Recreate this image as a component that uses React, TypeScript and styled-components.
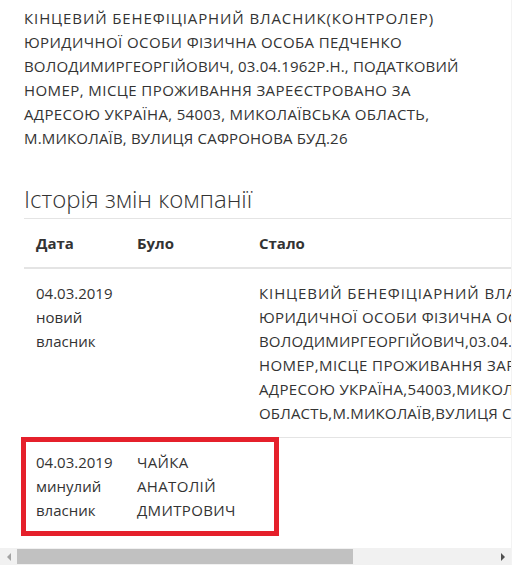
import React from "react";
import styled, { createGlobalStyle } from "styled-components";

const GlobalStyle = createGlobalStyle`
  html, body { margin: 0; padding: 0; background: #ffffff; }
  body { font-family: "Open Sans", "Noto Sans", "DejaVu Sans", sans-serif; color: #333333; }
`;

const Page = styled.div`
  width: 511px;
  border-right: 1px solid #f3f3f3;
  background: #ffffff;
`;

const Content = styled.div`
  padding: 6px 0 0 24px;
`;

const Paragraph = styled.p`
  margin: 0;
  font-size: 15px;
  line-height: 24px;
  color: #333333;
`;

const Line = styled.span<{ $spacing?: number }>`
  display: block;
  white-space: nowrap;
  letter-spacing: ${(p) => (p.$spacing !== undefined ? p.$spacing : 0.5)}px;
`;

const Heading = styled.h3`
  margin: 34px 0 4px;
  font-size: 24px;
  line-height: 30px;
  font-weight: 300;
  color: #333333;
`;

const Scroller = styled.div`
  width: 511px;
  overflow: hidden;
  padding-bottom: 14px;
`;

const Table = styled.table`
  margin-left: 24px;
  width: 697px;
  table-layout: fixed;
  border-collapse: collapse;
  font-size: 15px;
  line-height: 24px;
  color: #333333;
`;

const Th = styled.th<{ $w?: number }>`
  width: ${(p) => (p.$w ? `${p.$w}px` : "auto")};
  text-align: left;
  font-weight: 700;
  padding: 12px 12px;
  border-top: 1px solid #e4e4e4;
  border-bottom: 2px solid #e4e4e4;
  vertical-align: bottom;
`;

const Td = styled.td`
  position: relative;
  padding: 12px 12px;
  vertical-align: top;
  border-top: 1px solid #e4e4e4;
`;

const Names = styled.span`
  letter-spacing: 0.35px;
`;

const Annotation = styled.div`
  position: absolute;
  left: -3px;
  top: -1px;
  width: 258px;
  height: 99px;
  box-sizing: border-box;
  border: 5px solid #e5202b;
  pointer-events: none;
`;

const Scrollbar = styled.div`
  display: flex;
  align-items: stretch;
  width: 511px;
  height: 17px;
  background: #f1f1f1;
`;

const ArrowButton = styled.div<{ $dir: "left" | "right"; $enabled?: boolean }>`
  width: 17px;
  flex: 0 0 17px;
  display: flex;
  align-items: center;
  justify-content: center;
  &::before {
    content: "";
    width: 0;
    height: 0;
    border-top: 4px solid transparent;
    border-bottom: 4px solid transparent;
    ${(p) =>
      p.$dir === "left"
        ? `border-right: 4px solid ${p.$enabled ? "#505050" : "#a3a3a3"};`
        : `border-left: 4px solid ${p.$enabled ? "#505050" : "#a3a3a3"};`}
  }
`;

const Track = styled.div`
  flex: 1;
  display: flex;
  align-items: stretch;
  padding: 1px 0;
`;

const Thumb = styled.div`
  background: #c1c1c1;
`;

const topLines: [string, number][] = [
  ["КІНЦЕВИЙ БЕНЕФІЦІАРНИЙ ВЛАСНИК(КОНТРОЛЕР)", 0.9],
  ["ЮРИДИЧНОЇ ОСОБИ ФІЗИЧНА ОСОБА ПЕДЧЕНКО", 0.4],
  ["ВОЛОДИМИРГЕОРГІЙОВИЧ, 03.04.1962Р.Н., ПОДАТКОВИЙ", 0.17],
  ["НОМЕР, МІСЦЕ ПРОЖИВАННЯ ЗАРЕЄСТРОВАНО ЗА", 0.43],
  ["АДРЕСОЮ УКРАЇНА, 54003, МИКОЛАЇВСЬКА ОБЛАСТЬ,", 0.32],
  ["М.МИКОЛАЇВ, ВУЛИЦЯ САФРОНОВА БУД.26", 0.18],
];

const newLines: [string, number][] = [
  ["КІНЦЕВИЙ БЕНЕФІЦІАРНИЙ ВЛАСНИК(КОНТРОЛЕР)", 0.9],
  ["ЮРИДИЧНОЇ ОСОБИ ФІЗИЧНА ОСОБА ПЕДЧЕНКО", 0.4],
  ["ВОЛОДИМИРГЕОРГІЙОВИЧ,03.04.1962Р.Н.,ПОДАТКОВИЙ", 0.17],
  ["НОМЕР,МІСЦЕ ПРОЖИВАННЯ ЗАРЕЄСТРОВАНО ЗА", 0.43],
  ["АДРЕСОЮ УКРАЇНА,54003,МИКОЛАЇВСЬКА", 0.32],
  ["ОБЛАСТЬ,М.МИКОЛАЇВ,ВУЛИЦЯ САФРОНОВА БУД.26", 0.18],
];

export default function App() {
  const thumbWidth = 336;
  return (
    <>
      <GlobalStyle />
      <Page>
        <Content>
          <Paragraph>
            {topLines.map(([t, s]) => (
              <Line key={t} $spacing={s}>
                {t}
              </Line>
            ))}
          </Paragraph>
          <Heading>Історія змін компанії</Heading>
        </Content>
        <Scroller>
          <Table>
            <thead>
              <tr>
                <Th $w={77}>Дата</Th>
                <Th $w={98}>Було</Th>
                <Th>Стало</Th>
              </tr>
            </thead>
            <tbody>
              <tr>
                <Td>04.03.2019 новий власник</Td>
                <Td></Td>
                <Td>
                  {newLines.map(([t, s]) => (
                    <Line key={t} $spacing={s}>
                      {t}
                    </Line>
                  ))}
                </Td>
              </tr>
              <tr>
                <Td>
                  04.03.2019 минулий власник
                  <Annotation />
                </Td>
                <Td>
                  <Names>ЧАЙКА АНАТОЛІЙ ДМИТРОВИЧ</Names>
                </Td>
                <Td></Td>
              </tr>
            </tbody>
          </Table>
        </Scroller>
        <Scrollbar>
          <ArrowButton $dir="left" />
          <Track>
            <Thumb style={{ width: thumbWidth }} />
          </Track>
          <ArrowButton $dir="right" $enabled />
        </Scrollbar>
      </Page>
    </>
  );
}
